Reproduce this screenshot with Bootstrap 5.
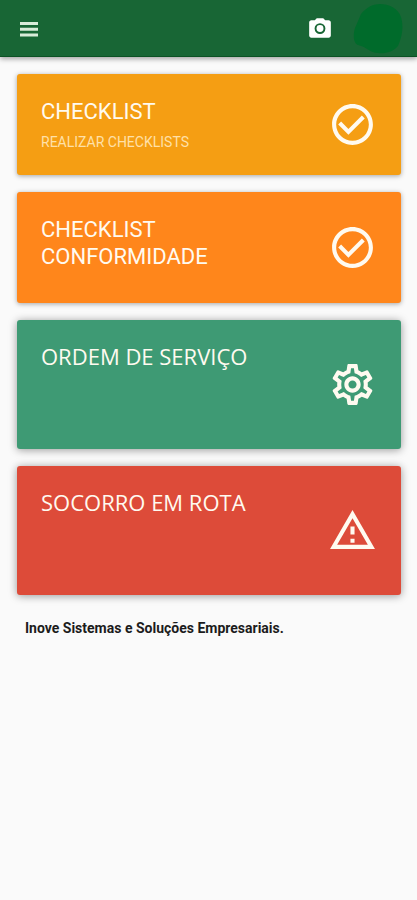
<!DOCTYPE html>
<html lang="pt-BR">
<head>
<meta charset="utf-8">
<meta name="viewport" content="width=device-width, initial-scale=1">
<title>Checklist</title>
<link href="https://cdn.jsdelivr.net/npm/bootstrap@5.3.0/dist/css/bootstrap.min.css" rel="stylesheet">
<style>
  body { background: #fafafa; font-family: Roboto, "Liberation Sans", sans-serif; }
  .app-bar { background: #186635; min-height: 57px; padding: 2px 14px 0 17px; border-bottom: 1px solid #0b5224; box-shadow: 0 2px 5px rgba(0, 0, 0, .35); }
  .app-bar svg, .tile svg { display: block; fill: currentColor; }
  .menu-btn { color: #d9ecd9; }
  .bar-actions { gap: 20px; }
  .tile-list { gap: 17px; padding: 17px 16px 0 17px; }
  .tile { border: 0; border-radius: 3px; padding: 24px; color: #fffaf0; box-shadow: 0 1px 5px rgba(0, 0, 0, .35); }
  .tile:hover { color: #fff; }
  .tile-title { font-size: 22px; line-height: 27px; }
  .tile-sub { font-size: 14px; line-height: 18px; margin-top: 8px; color: #ffe0a8; }
  .tile-amber { background: #f59e13; min-height: 101px; }
  .tile-orange { background: #ff861b; min-height: 111px; }
  .tile-green { background: #3e9a74; min-height: 129px; }
  .tile-red { background: #dd4b39; min-height: 129px; }
  .tile-green, .tile-red { box-shadow: 0 1px 8px rgba(0, 0, 0, .4); }
  .tile-green .tile-title, .tile-red .tile-title { font-family: "Open Sans", "Noto Sans", sans-serif; line-height: 24px; }
  .company { font-size: 14px; line-height: 20px; padding: 23px 25px; color: #1c1c1c; font-weight: 700; }
</style>
<script src="https://cdn.jsdelivr.net/npm/bootstrap@5.3.0/dist/js/bootstrap.bundle.min.js" defer></script>
</head>
<body>
<header class="app-bar d-flex align-items-center justify-content-between position-relative">
  <button type="button" class="btn border-0 p-0 menu-btn" aria-label="Menu">
    <svg width="24" height="24" viewBox="0 0 24 24"><path d="M3 16.500h18v3H3zM3 10.700h18v3H3zM3 5h18v3H3z"/></svg>
  </button>
  <div class="bar-actions d-flex align-items-center">
    <button type="button" class="btn border-0 p-0 text-white" aria-label="Câmera">
      <svg width="26" height="26" viewBox="0 1 24 24"><path fill-rule="evenodd" d="M9 3 7.170 5H4C2.900 5 2 5.900 2 7v12c0 1.100.9 2 2 2h16c1.100 0 2-.9 2-2V7c0-1.100-.9-2-2-2h-3.170L15 3H9zm3 14.600a5 5 0 1 1 0-10 5 5 0 0 1 0 10z"/><circle cx="12" cy="12.600" r="3.200"/></svg>
    </button>
    <button type="button" class="btn border-0 p-0" aria-label="Perfil">
      <svg width="50" height="50" viewBox="0 0 50 50"><path fill="#006b2b" d="M27 0C36 0 45 4 48 13C51 23 49 33 45 42C40 48 32 50 25 49C17 49 14 43 5 41C0 39 0 30 2 24C4 19 6 15 8 10C13 4 19 0 27 0Z"/></svg>
    </button>
  </div>
</header>
<main>
  <nav class="tile-list d-flex flex-column" aria-label="Módulos">
    <a href="#" class="card tile tile-amber flex-row align-items-center justify-content-between text-decoration-none">
      <div class="align-self-start">
        <div class="tile-title">CHECKLIST</div>
        <div class="tile-sub">REALIZAR CHECKLISTS</div>
      </div>
      <svg class="flex-shrink-0" width="49" height="49" viewBox="0 0 24 24"><path d="M16.590 7.580 10 14.170l-3.590-3.580L5 12l5 5 8-8zM12 2C6.480 2 2 6.480 2 12s4.480 10 10 10 10-4.480 10-10S17.520 2 12 2zm0 18c-4.420 0-8-3.580-8-8s3.580-8 8-8 8 3.580 8 8-3.580 8-8 8z"/></svg>
    </a>
    <a href="#" class="card tile tile-orange flex-row align-items-center justify-content-between text-decoration-none">
      <div class="tile-title align-self-start">CHECKLIST<br>CONFORMIDADE</div>
      <svg class="flex-shrink-0" width="49" height="49" viewBox="0 0 24 24"><path d="M16.590 7.580 10 14.170l-3.590-3.580L5 12l5 5 8-8zM12 2C6.480 2 2 6.480 2 12s4.480 10 10 10 10-4.480 10-10S17.520 2 12 2zm0 18c-4.420 0-8-3.580-8-8s3.580-8 8-8 8 3.580 8 8-3.580 8-8 8z"/></svg>
    </a>
    <a href="#" class="card tile tile-green flex-row align-items-center justify-content-between text-decoration-none">
      <div class="tile-title align-self-start">ORDEM DE SERVIÇO</div>
      <svg class="flex-shrink-0" width="49" height="49" viewBox="0 0 24 24"><path d="M19.430 12.980c.04-.32.07-.64.07-.98 0-.34-.03-.66-.07-.98l2.110-1.650c.19-.15.24-.42.12-.64l-2-3.460c-.09-.16-.26-.25-.44-.25-.06 0-.12.010-.17.030l-2.490 1c-.52-.4-1.080-.73-1.690-.98l-.38-2.650C14.460 2.180 14.250 2 14 2h-4c-.25 0-.46.180-.49.420l-.38 2.650c-.61.250-1.170.590-1.690.980l-2.490-1c-.06-.02-.12-.03-.18-.03-.17 0-.34.090-.43.250l-2 3.460c-.13.220-.07.490.12.640l2.110 1.650c-.04.320-.07.650-.07.980 0 .33.030.66.070.98l-2.110 1.650c-.19.150-.24.420-.12.640l2 3.460c.09.160.26.250.44.250.06 0 .12-.01.170-.03l2.490-1c.52.400 1.080.730 1.690.980l.38 2.650c.03.240.24.420.49.420h4c.25 0 .46-.18.490-.42l.38-2.650c.61-.25 1.170-.59 1.690-.98l2.490 1c.06.020.12.030.18.030.17 0 .34-.09.430-.25l2-3.460c.12-.22.070-.49-.12-.64l-2.110-1.650zm-1.980-1.710c.04.310.05.520.05.730 0 .21-.02.430-.05.730l-.14 1.130.89.700 1.080.840-.7 1.210-1.270-.51-1.040-.42-.9.680c-.43.320-.84.560-1.250.730l-1.060.430-.16 1.130-.2 1.350h-1.400l-.19-1.350-.16-1.130-1.060-.43c-.43-.18-.83-.41-1.230-.71l-.91-.7-1.060.430-1.270.510-.7-1.210 1.080-.84.890-.7-.14-1.130c-.03-.31-.05-.54-.05-.74s.020-.43.050-.73l.14-1.130-.89-.7-1.080-.84.700-1.210 1.270.510 1.040.420.900-.68c.43-.32.840-.56 1.250-.73l1.060-.43.160-1.130.2-1.350h1.390l.19 1.350.16 1.130 1.060.430c.43.180.83.410 1.230.710l.91.700 1.060-.43 1.270-.51.700 1.210-1.070.850-.89.700.14 1.130zM12 8c-2.210 0-4 1.790-4 4s1.790 4 4 4 4-1.790 4-4-1.790-4-4-4zm0 6c-1.100 0-2-.9-2-2s.9-2 2-2 2 .9 2 2-.9 2-2 2z"/></svg>
    </a>
    <a href="#" class="card tile tile-red flex-row align-items-center justify-content-between text-decoration-none">
      <div class="tile-title align-self-start">SOCORRO EM ROTA</div>
      <svg class="flex-shrink-0" width="49" height="49" viewBox="0 0 24 24"><path d="M12 5.990 19.530 19H4.470L12 5.990M12 2 1 21h22L12 2zm1 14h-2v2h2v-2zm0-6h-2v4h2v-4z"/></svg>
    </a>
  </nav>
  <p class="company mb-0">Inove Sistemas e Soluções Empresariais.</p>
</main>
</body>
</html>
